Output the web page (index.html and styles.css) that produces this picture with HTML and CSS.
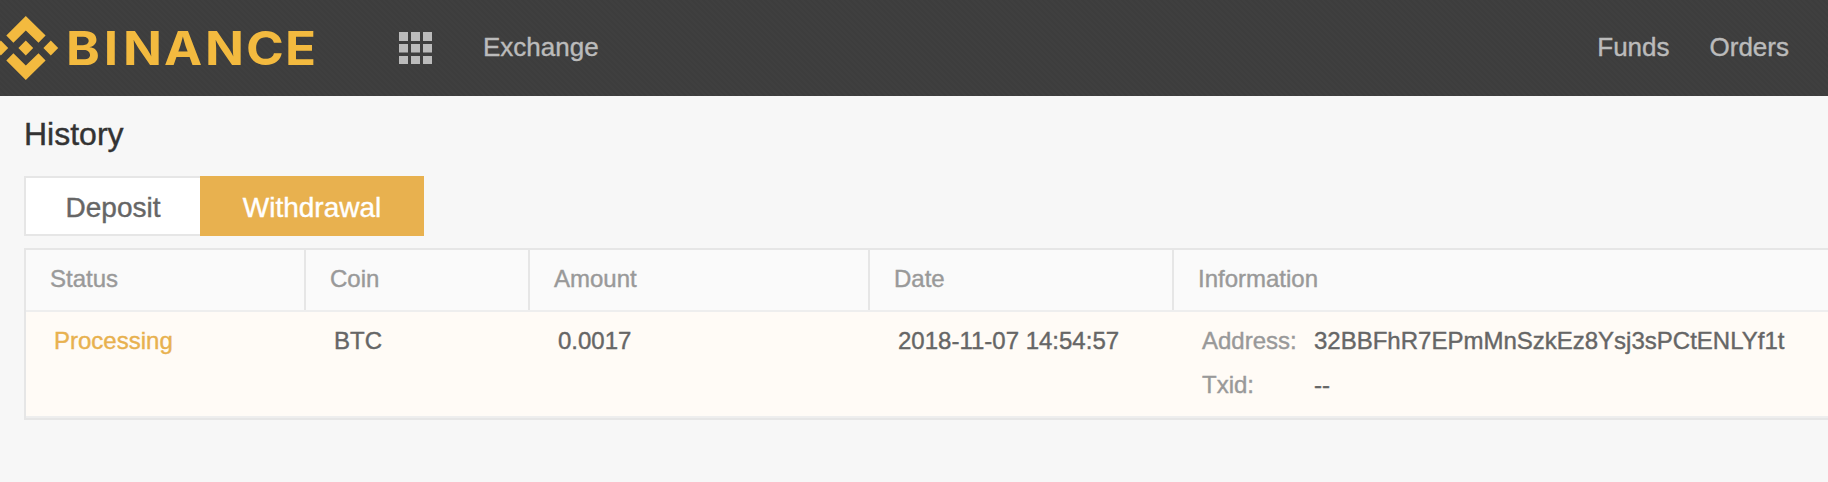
FILE: index.html
```
<!DOCTYPE html>
<html lang="en">
<head>
<meta charset="utf-8">
<title>Binance - History</title>
<link rel="stylesheet" href="styles.css">
</head>
<body>
<header class="topbar">
  <svg class="logo" width="320" height="96" viewBox="0 0 320 96" role="img" aria-label="Binance">
    <path d="M25.8 16 45.6 35.6 38.5 42.8 25.8 30.4 13.4 42.8 6.3 35.6ZM25.8 80 45.6 60.4 38.5 53.2 25.8 65.6 13.4 53.2 6.3 60.4ZM25.8 40.6 33.2 48 25.8 55.4 18.4 48ZM50.8 40.6 58.2 48 50.8 55.4 43.400 48ZM.8 40.6 8.2 48 .8 55.4-6.6 48Z"/>
    <text class="wordmark" transform="scale(1.1 1)" y="65.2" x="60 94.3 111.8 149 186.400 223.6 259.2">BINANCE</text>
  </svg>
  <svg class="grid-icon" width="33" height="32" viewBox="0 0 33 32" aria-hidden="true">
    <path d="M0 0h9v9H0zM12 0h9v9h-9zM24 0h9v9h-9zM0 12h9v8.500H0zM12 12h9v8.500h-9zM24 12h9v8.500h-9zM0 24h9v8H0zM12 24h9v8h-9zM24 24h9v8h-9z"/>
  </svg>
  <a class="nav-link">Exchange</a>
  <nav class="nav-right">
    <a class="nav-link">Funds</a>
    <a class="nav-link">Orders</a>
  </nav>
</header>
<main class="page">
  <h1 class="title">History</h1>
  <div class="tabs">
    <button class="tab">Deposit</button>
    <button class="tab tab-active">Withdrawal</button>
  </div>
  <section class="table">
    <div class="row head">
      <div class="cell">Status</div>
      <div class="cell">Coin</div>
      <div class="cell">Amount</div>
      <div class="cell">Date</div>
      <div class="cell">Information</div>
    </div>
    <div class="row record">
      <div class="cell status">Processing</div>
      <div class="cell">BTC</div>
      <div class="cell">0.0017</div>
      <div class="cell">2018-11-07 14:54:57</div>
      <dl class="cell info">
        <dt>Address:</dt><dd>32BBFhR7EPmMnSzkEz8Ysj3sPCtENLYf1t</dd>
        <dt>Txid:</dt><dd>--</dd>
      </dl>
    </div>
  </section>
</main>
</body>
</html>
```
FILE: styles.css
```
* { box-sizing: border-box; }
body {
  margin: 0;
  min-height: 100vh;
  overflow: hidden;
  background: #f7f7f7;
  color: #666;
  font-family: "Liberation Sans", Arial, sans-serif;
  -webkit-text-stroke: 0.4px;
}
.topbar {
  display: flex;
  align-items: center;
  height: 96px;
  padding-right: 39px;
  background: repeating-linear-gradient(45deg, #3d3d3d 0 2px, #3f3f3f 2px 4px);
}
.logo { fill: #f3ba3f; }
.wordmark {
  font: 700 46.5px Inter, sans-serif;
  -webkit-text-stroke: 0;
}
.grid-icon { margin: 0 51px 0 79px; fill: #bbb; }
.nav-link { display: block; padding-bottom: 3px; color: #bbb; font-size: 26px; line-height: 30px; }
.nav-right { display: flex; gap: 40px; margin-left: auto; }
.page { padding: 16px 0 0 24px; }
.title {
  margin: 0;
  color: #333;
  font-size: 32px;
  font-weight: 400;
  line-height: 44px;
}
.tabs { display: flex; margin-top: 20px; }
.tab {
  width: 176px;
  height: 60px;
  padding: 3px 0 0;
  border: 2px solid #e6e6e6;
  border-right: 0;
  background: #fff;
  color: #666;
  font: 28px "Liberation Sans", Arial, sans-serif;
}
.tab-active {
  width: 224px;
  border: 0;
  background: #e8b14f;
  color: #fff;
}
.table {
  margin-top: 12px;
  border: 2px solid #e6e6e6;
  border-right: 0;
  font-size: 24px;
}
.row {
  display: grid;
  grid-template-columns: 280px 224px 340px 304px 1fr;
  border-bottom: 2px solid #eee;
}
.head { height: 62px; background: #fafafa; color: #999; line-height: 58px; }
.head .cell { padding-left: 24px; border-right: 2px solid #e6e6e6; }
.head .cell:last-child { border-right: 0; }
.record { height: 106px; background: #fffbf6; line-height: 44px; }
.record .cell { padding: 7px 0 0 28px; }
.status { color: #e8b14f; }
.info {
  display: grid;
  grid-template-columns: 112px 1fr;
  align-content: start;
  margin: 0;
}
.info dt { color: #999; }
.info dd { margin: 0; }
```
